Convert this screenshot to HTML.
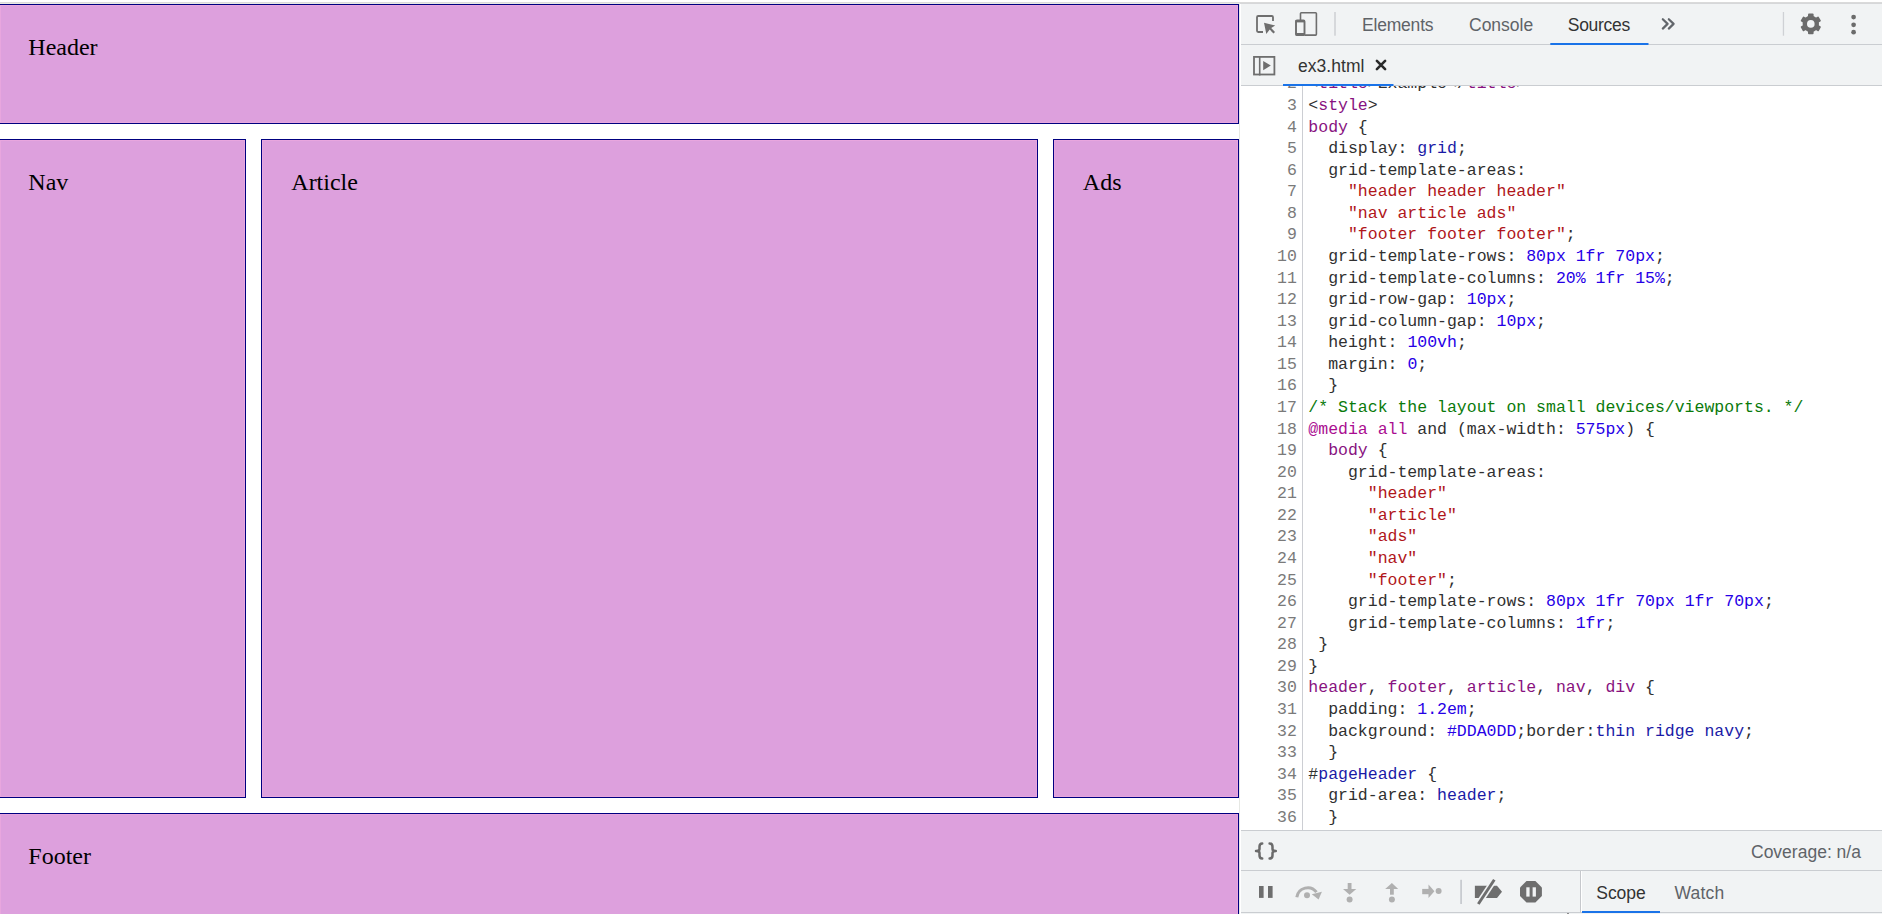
<!DOCTYPE html>
<html>
<head>
<meta charset="utf-8">
<title>ex3.html - DevTools</title>
<style>
html,body{margin:0;padding:0}
body{width:1882px;height:914px;position:relative;overflow:hidden;background:#fff;font-family:"Liberation Sans",sans-serif}
.abs{position:absolute}
.box{position:absolute;box-sizing:border-box;background:#dda0dd;border:1px solid #000080;box-shadow:inset 0 0 0 1px #e8a6de;font-family:"Liberation Serif",serif;font-size:24px;color:#000;padding:28.8px 0 0 28.8px;line-height:normal}
#dt{position:absolute;left:1241px;top:4px;width:641px;height:910px;background:#f1f3f4}
.hl{position:absolute;height:1px;background:#cacdd1}
.tab{position:absolute;font-size:17.5px;color:#5f6368;white-space:pre;line-height:20px}
#editor{position:absolute;left:1241px;top:86px;width:641px;height:744px;background:#fff;overflow:hidden}
.ln{position:absolute;left:0;height:21.58px;line-height:21.58px;white-space:pre;font-family:"Liberation Mono",monospace;font-size:16.5px;width:641px}
.num{position:absolute;left:0;width:55.8px;text-align:right;color:#7a7a7a}
.code{position:absolute;left:67.35px;color:#303030}
svg{position:absolute;overflow:visible}
</style>
</head>
<body>
<!-- browser top line -->
<div class="abs" style="left:0;top:2px;width:1882px;height:1px;background:#dadada"></div>
<div class="abs" style="left:0;top:3px;width:1240px;height:1px;background:#e9e9e3"></div>
<div class="abs" style="left:1240px;top:3px;width:642px;height:1px;background:#d6d7d9"></div>

<!-- page -->
<div class="box" style="left:-1px;top:4px;width:1240px;height:120px;padding-left:28.3px">Header</div>
<div class="box" style="left:-1px;top:139px;width:247px;height:659px;padding-left:28.3px">Nav</div>
<div class="box" style="left:261px;top:139px;width:777px;height:659px;padding-left:29.3px">Article</div>
<div class="box" style="left:1053px;top:139px;width:186px;height:659px">Ads</div>
<div class="box" style="left:-1px;top:813px;width:1240px;height:120px;padding-left:28.3px">Footer</div>
<div class="abs" style="left:1239px;top:4px;width:1px;height:910px;background:#e6e8e4"></div>

<!-- devtools -->
<div id="dt"></div>
<div class="hl" style="left:1241px;top:44px;width:641px"></div>
<div class="hl" style="left:1241px;top:85px;width:641px"></div>

<!-- tab bar icons -->
<svg style="left:1241px;top:4px" width="641" height="40" viewBox="1241 4 641 40">
  <!-- inspect -->
  <path d="M1263 32H1258.2Q1257 32 1257 30.8V17.2Q1257 16 1258.2 16H1271.8Q1273 16 1273 17.2V21" fill="none" stroke="#6e6e6e" stroke-width="1.8"/>
  <path d="M1264 22.8L1275.2 25.4L1271.2 28L1275 32L1273.5 33.5L1269.7 29.6L1266.3 34.1Z" fill="#6e6e6e"/>
  <!-- device -->
  <path d="M1300.5 20V13.6Q1300.5 12.8 1301.3 12.8H1315.6Q1316.4 12.8 1316.4 13.6V34.3Q1316.4 35.1 1315.6 35.1H1305" fill="none" stroke="#6e6e6e" stroke-width="1.6"/>
  <path d="M1296 21.5Q1296 20.5 1297 20.5H1303.5Q1304.5 20.5 1304.5 21.5V34Q1304.5 35 1303.5 35H1297Q1296 35 1296 34Z" fill="none" stroke="#6e6e6e" stroke-width="1.9"/>
  <rect x="1295.5" y="20" width="9.5" height="2.4" fill="#6e6e6e"/>
  <rect x="1295.5" y="33" width="9.5" height="2.7" rx="0.8" fill="#6e6e6e"/>
  <rect x="1334.2" y="12" width="1.6" height="23.7" fill="#cfd1d5"/>
  <!-- >> -->
  <path d="M1662.8 19.2L1667.6 23.9L1662.8 28.6M1668.8 19.2L1673.6 23.9L1668.8 28.6" fill="none" stroke="#62666b" stroke-width="2.2" stroke-linecap="round" stroke-linejoin="round"/>
  <rect x="1782.8" y="12" width="1.3" height="23.7" fill="#cfd1d5"/>
  <!-- gear -->
  <g transform="translate(1810.8 23.9)" fill="#6b6b6b">
    <circle r="8.2"/>
    <rect x="-2.8" y="-10.4" width="5.6" height="20.8" rx="1"/>
    <rect x="-2.8" y="-10.4" width="5.6" height="20.8" rx="1" transform="rotate(60)"/>
    <rect x="-2.8" y="-10.4" width="5.6" height="20.8" rx="1" transform="rotate(120)"/>
    <circle r="3.8" fill="#f1f3f4"/>
  </g>
  <!-- dots -->
  <circle cx="1853.6" cy="17.1" r="2.35" fill="#6b6b6b"/>
  <circle cx="1853.6" cy="24.8" r="2.35" fill="#6b6b6b"/>
  <circle cx="1853.6" cy="32.2" r="2.35" fill="#6b6b6b"/>
  <!-- sources underline -->
  <rect x="1550.3" y="43" width="98.2" height="2" fill="#1a73e8"/>
</svg>
<div class="tab" style="left:1362px;top:15px;letter-spacing:-0.2px">Elements</div>
<div class="tab" style="left:1469px;top:15px">Console</div>
<div class="tab" style="left:1567.8px;top:15px;color:#333;letter-spacing:-0.3px">Sources</div>

<!-- second toolbar -->
<svg style="left:1241px;top:45px" width="641" height="40" viewBox="1241 45 641 40">
  <rect x="1254" y="56.9" width="20.4" height="17.6" fill="none" stroke="#6e6e6e" stroke-width="1.8"/>
  <rect x="1258.9" y="56" width="1.6" height="19.5" fill="#6e6e6e"/>
  <path d="M1263.2 60.9L1270.8 65.6L1263.2 70.3Z" fill="#6e6e6e"/>
  <path d="M1376.9 60.9L1385.1 69.1M1385.1 60.9L1376.9 69.1" stroke="#2a2a2a" stroke-width="2.6" stroke-linecap="round"/>
  <rect x="1283" y="84" width="110.5" height="2" fill="#1a73e8"/>
</svg>
<div class="tab" style="left:1298px;top:56px;color:#333;letter-spacing:0.05px">ex3.html</div>

<!-- editor -->
<div id="editor">
<div class="abs" style="left:61px;top:0;width:1.3px;height:744px;background:#ccced3"></div>
<div class="ln" style="top:-13.00px"><span class="num">2</span><span class="code">&lt;<span style="color:#881280">title</span>&gt;Example&lt;/<span style="color:#881280">title</span>&gt;</span></div>
<div class="ln" style="top:9.00px"><span class="num">3</span><span class="code">&lt;<span style="color:#881280">style</span>&gt;</span></div>
<div class="ln" style="top:31.00px"><span class="num">4</span><span class="code"><span style="color:#881280">body</span> {</span></div>
<div class="ln" style="top:52.00px"><span class="num">5</span><span class="code">  display: <span style="color:#1a1aa6">grid</span>;</span></div>
<div class="ln" style="top:74.00px"><span class="num">6</span><span class="code">  grid-template-areas:</span></div>
<div class="ln" style="top:95.00px"><span class="num">7</span><span class="code">    <span style="color:#b0161a">&quot;header header header&quot;</span></span></div>
<div class="ln" style="top:117.00px"><span class="num">8</span><span class="code">    <span style="color:#b0161a">&quot;nav article ads&quot;</span></span></div>
<div class="ln" style="top:138.00px"><span class="num">9</span><span class="code">    <span style="color:#b0161a">&quot;footer footer footer&quot;</span>;</span></div>
<div class="ln" style="top:160.00px"><span class="num">10</span><span class="code">  grid-template-rows: <span style="color:#2600e6">80px</span> <span style="color:#2600e6">1fr</span> <span style="color:#2600e6">70px</span>;</span></div>
<div class="ln" style="top:182.00px"><span class="num">11</span><span class="code">  grid-template-columns: <span style="color:#2600e6">20%</span> <span style="color:#2600e6">1fr</span> <span style="color:#2600e6">15%</span>;</span></div>
<div class="ln" style="top:203.00px"><span class="num">12</span><span class="code">  grid-row-gap: <span style="color:#2600e6">10px</span>;</span></div>
<div class="ln" style="top:225.00px"><span class="num">13</span><span class="code">  grid-column-gap: <span style="color:#2600e6">10px</span>;</span></div>
<div class="ln" style="top:246.00px"><span class="num">14</span><span class="code">  height: <span style="color:#2600e6">100vh</span>;</span></div>
<div class="ln" style="top:268.00px"><span class="num">15</span><span class="code">  margin: <span style="color:#2600e6">0</span>;</span></div>
<div class="ln" style="top:289.00px"><span class="num">16</span><span class="code">  }</span></div>
<div class="ln" style="top:311.00px"><span class="num">17</span><span class="code"><span style="color:#0a7a0a">/* Stack the layout on small devices/viewports. */</span></span></div>
<div class="ln" style="top:333.00px"><span class="num">18</span><span class="code"><span style="color:#aa0d91">@media</span> <span style="color:#aa0d91">all</span> and (max-width: <span style="color:#2600e6">575px</span>) {</span></div>
<div class="ln" style="top:354.00px"><span class="num">19</span><span class="code">  <span style="color:#881280">body</span> {</span></div>
<div class="ln" style="top:376.00px"><span class="num">20</span><span class="code">    grid-template-areas:</span></div>
<div class="ln" style="top:397.00px"><span class="num">21</span><span class="code">      <span style="color:#b0161a">&quot;header&quot;</span></span></div>
<div class="ln" style="top:419.00px"><span class="num">22</span><span class="code">      <span style="color:#b0161a">&quot;article&quot;</span></span></div>
<div class="ln" style="top:440.00px"><span class="num">23</span><span class="code">      <span style="color:#b0161a">&quot;ads&quot;</span></span></div>
<div class="ln" style="top:462.00px"><span class="num">24</span><span class="code">      <span style="color:#b0161a">&quot;nav&quot;</span></span></div>
<div class="ln" style="top:484.00px"><span class="num">25</span><span class="code">      <span style="color:#b0161a">&quot;footer&quot;</span>;</span></div>
<div class="ln" style="top:505.00px"><span class="num">26</span><span class="code">    grid-template-rows: <span style="color:#2600e6">80px</span> <span style="color:#2600e6">1fr</span> <span style="color:#2600e6">70px</span> <span style="color:#2600e6">1fr</span> <span style="color:#2600e6">70px</span>;</span></div>
<div class="ln" style="top:527.00px"><span class="num">27</span><span class="code">    grid-template-columns: <span style="color:#2600e6">1fr</span>;</span></div>
<div class="ln" style="top:548.00px"><span class="num">28</span><span class="code"> }</span></div>
<div class="ln" style="top:570.00px"><span class="num">29</span><span class="code">}</span></div>
<div class="ln" style="top:591.00px"><span class="num">30</span><span class="code"><span style="color:#881280">header</span>, <span style="color:#881280">footer</span>, <span style="color:#881280">article</span>, <span style="color:#881280">nav</span>, <span style="color:#881280">div</span> {</span></div>
<div class="ln" style="top:613.00px"><span class="num">31</span><span class="code">  padding: <span style="color:#2600e6">1.2em</span>;</span></div>
<div class="ln" style="top:635.00px"><span class="num">32</span><span class="code">  background: <span style="color:#2600e6">#DDA0DD</span>;border:<span style="color:#1a1aa6">thin</span> <span style="color:#1a1aa6">ridge</span> <span style="color:#1a1aa6">navy</span>;</span></div>
<div class="ln" style="top:656.00px"><span class="num">33</span><span class="code">  }</span></div>
<div class="ln" style="top:678.00px"><span class="num">34</span><span class="code">#<span style="color:#1a1aa6">pageHeader</span> {</span></div>
<div class="ln" style="top:699.00px"><span class="num">35</span><span class="code">  grid-area: <span style="color:#1a1aa6">header</span>;</span></div>
<div class="ln" style="top:721.00px"><span class="num">36</span><span class="code">  }</span></div>
</div>

<!-- status bar -->
<div class="hl" style="left:1241px;top:830px;width:641px"></div>
<svg style="left:1241px;top:831px" width="641" height="40" viewBox="1241 831 641 40">
  <path d="M1262.2 843.4Q1259.5 843.4 1259.5 846.8V849Q1259.5 851 1256 851Q1259.5 851 1259.5 853V855.2Q1259.5 858.6 1262.2 858.6M1269.6 843.4Q1272.5 843.4 1272.5 846.8V849Q1272.5 851 1275.8 851Q1272.5 851 1272.5 853V855.2Q1272.5 858.6 1269.6 858.6" fill="none" stroke="#6b6b6b" stroke-width="2.5" stroke-linecap="round" stroke-linejoin="round"/>
</svg>
<div class="tab" style="left:1751px;top:842px">Coverage: n/a</div>
<div class="hl" style="left:1241px;top:870px;width:641px"></div>

<!-- debugger toolbar -->
<div class="hl" style="left:1241px;top:912px;width:641px"></div>
<svg style="left:1241px;top:871px" width="641" height="43" viewBox="1241 871 641 43">
  <rect x="1259" y="886" width="4.6" height="11.9" fill="#6e6e6e"/>
  <rect x="1268" y="886" width="4.6" height="11.9" fill="#6e6e6e"/>
  <!-- step over -->
  <path d="M1296.8 897.2A11 11 0 0 1 1316.5 892.2" fill="none" stroke="#b0b0b0" stroke-width="3"/>
  <path d="M1311.8 894.2L1321.9 891.8L1318.6 899.6Z" fill="#b0b0b0"/>
  <circle cx="1307" cy="895.3" r="3" fill="#b0b0b0"/>
  <!-- step into -->
  <rect x="1347.7" y="883" width="3.8" height="7" fill="#b0b0b0"/>
  <path d="M1343 888.9H1356.3L1349.6 894.7Z" fill="#b0b0b0"/>
  <circle cx="1349.6" cy="899.5" r="3" fill="#b0b0b0"/>
  <!-- step out -->
  <rect x="1390" y="888" width="3.8" height="6.7" fill="#b0b0b0"/>
  <path d="M1385.2 888.9H1398.2L1391.9 883Z" fill="#b0b0b0"/>
  <circle cx="1391.9" cy="899.5" r="3" fill="#b0b0b0"/>
  <!-- step -->
  <rect x="1422.2" y="888.9" width="7" height="5.3" fill="#b0b0b0"/>
  <path d="M1428.5 884.6L1434.4 891.3L1428.5 897.9Z" fill="#b0b0b0"/>
  <circle cx="1438.6" cy="891" r="3" fill="#b0b0b0"/>
  <rect x="1460.2" y="879.8" width="1.8" height="24.2" fill="#c8cbd0"/>
  <!-- deactivate breakpoints -->
  <path d="M1474.9 885.8H1497L1502 891.8L1497 898H1474.9Z" fill="#6e6e6e"/>
  <path d="M1478.3 904L1494.3 879.8" stroke="#f1f3f4" stroke-width="6"/>
  <path d="M1478.3 904L1494.3 879.8" stroke="#6e6e6e" stroke-width="2.9" stroke-linecap="butt"/>
  <!-- pause on exceptions -->
  <path d="M1526.5 880.9H1535.4L1541.9 887.4V896H1541.9L1535.4 902.5H1526.5L1520 896V887.4Z" fill="#6e6e6e"/>
  <rect x="1526.3" y="887.3" width="3.3" height="9.3" fill="#f1f3f4"/>
  <rect x="1532.6" y="887.3" width="3.3" height="9.3" fill="#f1f3f4"/>
  <rect x="1580" y="871" width="1.2" height="42" fill="#c6c8cc"/>
  <rect x="1581" y="871" width="1" height="41" fill="#ffffff"/>
  <rect x="1567" y="913" width="2" height="1" fill="#8c8c8c"/>
  <rect x="1582" y="911" width="78" height="2" fill="#1a73e8"/>
</svg>
<div class="tab" style="left:1596.3px;top:883px;color:#333;letter-spacing:-0.07px">Scope</div>
<div class="tab" style="left:1674.5px;top:883px;letter-spacing:0.17px">Watch</div>
</body>
</html>
